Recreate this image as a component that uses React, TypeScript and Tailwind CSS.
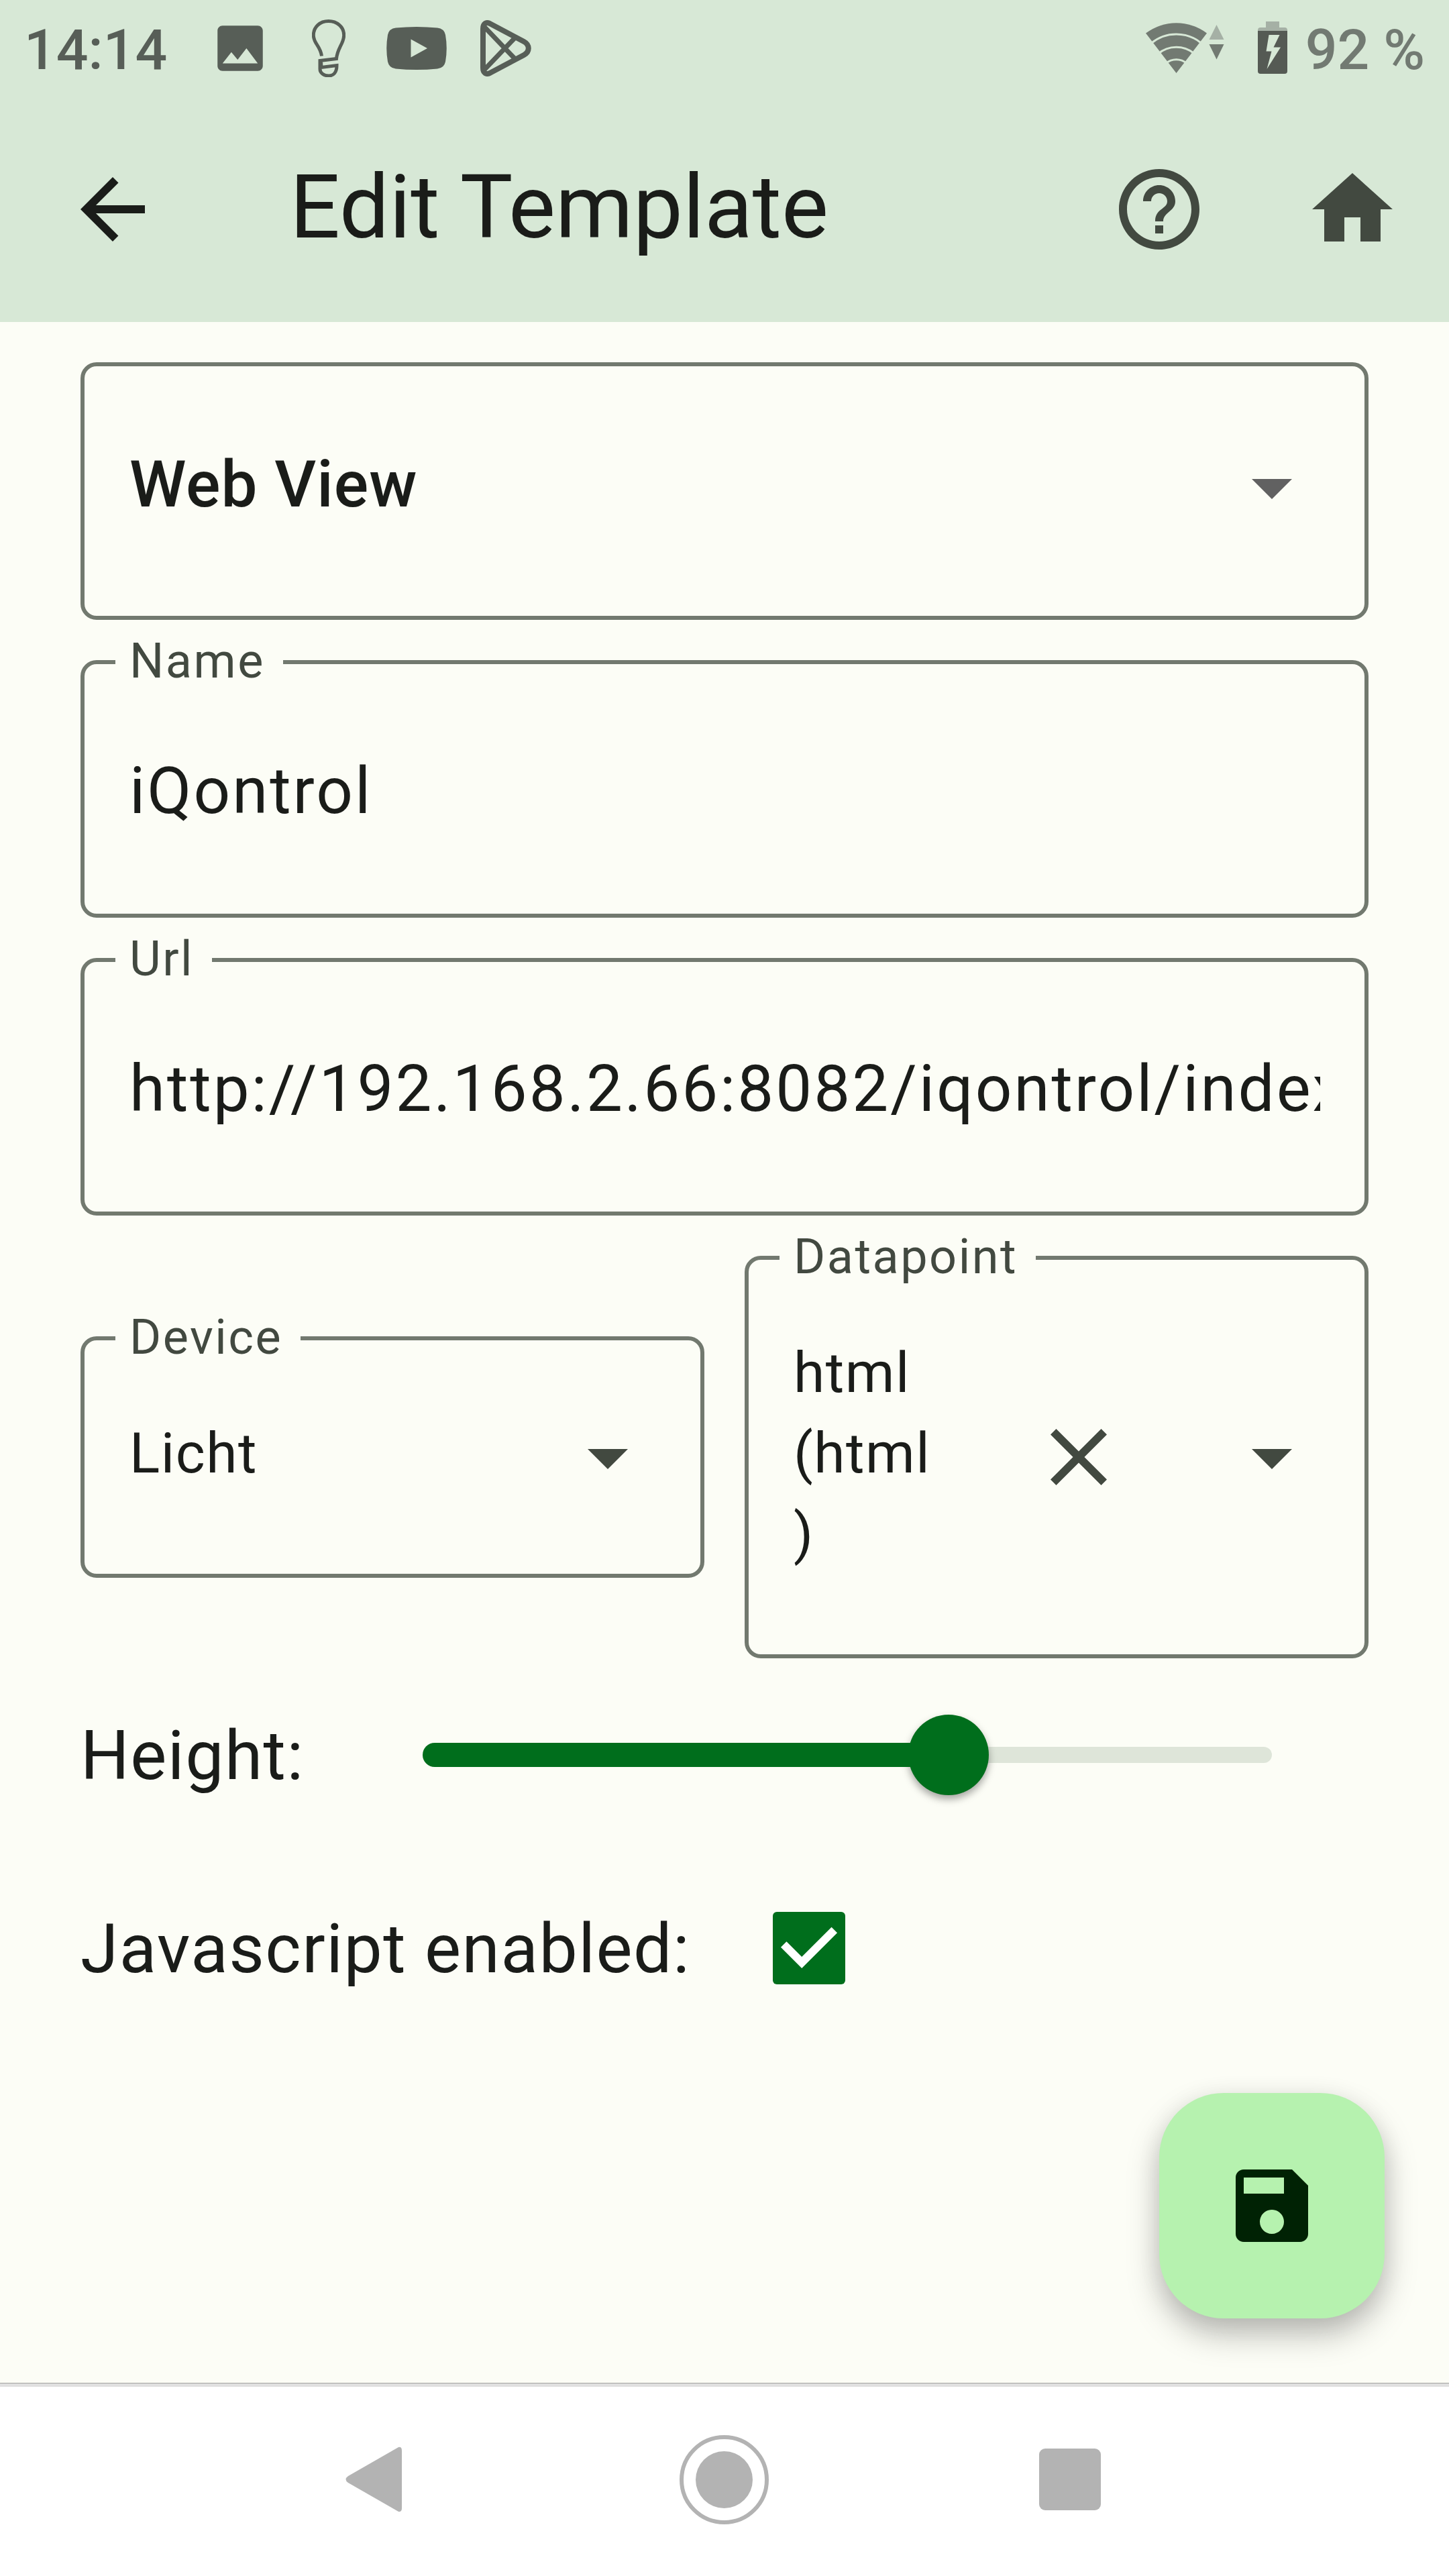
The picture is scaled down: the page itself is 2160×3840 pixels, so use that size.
import type { ReactNode } from "react";

function Glyph({ d, className }: { d: string; className: string }) {
  return (
    <svg viewBox="0 0 24 24" fill="currentColor" className={className} aria-hidden="true">
      <path d={d} />
    </svg>
  );
}

const ICONS = {
  image:
    "M21 19V5c0-1.1-.9-2-2-2H5c-1.1 0-2 .9-2 2v14c0 1.1.9 2 2 2h14c1.1 0 2-.9 2-2zM8.5 13.5l2.5 3.01L14.5 12l4.5 6H5l3.5-4.5z",
  back: "M20 11H7.83l5.59-5.59L12 4l-8 8 8 8 1.41-1.41L7.83 13H20v-2z",
  help: "M11 18h2v-2h-2v2zm1-16C6.48 2 2 6.48 2 12s4.48 10 10 10 10-4.48 10-10S17.52 2 12 2zm0 18c-4.41 0-8-3.59-8-8s3.59-8 8-8 8 3.59 8 8-3.59 8-8 8zm0-14c-2.21 0-4 1.79-4 4h2c0-1.1.9-2 2-2s2 .9 2 2c0 2-3 1.75-3 5h2c0-2.25 3-2.5 3-5 0-2.21-1.79-4-4-4z",
  home: "M10 20v-6h4v6h5v-8h3L12 3 2 12h3v8z",
  dropDown: "M7 10l5 5 5-5z",
  close:
    "M19 6.41L17.59 5 12 10.59 6.41 5 5 6.41 10.59 12 5 17.59 6.41 19 12 13.41 17.59 19 19 17.59 13.41 12z",
  save: "M17 3H5c-1.11 0-2 .9-2 2v14c0 1.1.89 2 2 2h14c1.1 0 2-.9 2-2V7l-4-4zm-5 16c-1.66 0-3-1.34-3-3s1.34-3 3-3 3 1.34 3 3-1.34 3-3 3zm3-10H5V5h10v4z",
};

function StatusBar() {
  return (
    <div className="flex h-[144px] items-center pl-[36px] pr-[36px] text-[84px] leading-[84px] font-medium text-[#575e57]">
      <span className="w-[277px] pt-[6px]">14:14</span>
      <Glyph d={ICONS.image} className="size-[90px] shrink-0" />
      <svg viewBox="0 0 50 86" className="ml-[62px] h-[86px] w-[50px] shrink-0" fill="none" stroke="currentColor" strokeWidth="5">
        <path d="M14.5 54.5C12.500 39 2.300 36 2.300 23.500C2.300 11 12 2.500 24.700 2.500S47.700 11 47.700 23.500C47.700 36 38 42 36.500 58.500L12 61.500V74C12 80 18 84 25 84S37 79 37 68.500L14 71.500L13.500 62" />
      </svg>
      <svg viewBox="0 0 90 64" className="ml-[61px] h-[64px] w-[90px] shrink-0" aria-hidden="true">
        <path
          fill="currentColor"
          fillRule="evenodd"
          d="M14 1.500Q45-1.500 76 1.500Q86 2.500 88 12Q91.500 32 88 52Q86 61.500 76 62.500Q45 65.500 14 62.500Q4 61.500 2 52Q-1.500 32 2 12Q4 2.500 14 1.500ZM36.500 18.500V45.500L61 32Z"
        />
      </svg>
      <svg viewBox="0 0 76 84" className="ml-[50px] h-[84px] w-[76px] shrink-0" fill="none" stroke="currentColor" strokeWidth="8" strokeLinejoin="round">
        <path d="M4 13C4 5 9 2 15 5.500L65 32C74 37 74 47 65 52L15 78.500C9 82 4 79 4 71Z" />
        <path strokeWidth="7" d="M6 10L52 58M6 74L52 26" />
      </svg>
      <div className="flex-1" />
      <svg viewBox="0 0 117 75" className="mb-[2px] h-[75px] w-[117px] shrink-0" aria-hidden="true">
        <path fill="#727a72" d="M45.500 75L0 15.600A75 75 0 0 1 91 15.600Z" />
        <g fill="none" stroke="#d7e8d6" strokeWidth="3">
          <path d="M8 30.500A58.500 58.500 0 0 1 83 30.500" />
          <path d="M18 46.500A42 42 0 0 1 73 46.500" />
          <path d="M30 60.500A24 24 0 0 1 61 60.500" />
        </g>
        <path fill="#a5b0a5" d="M94.500 25L105.500 3L116.500 25Z" />
        <path fill="#727a72" d="M94.500 32L105.500 54.500L116.500 32Z" />
      </svg>
      <svg viewBox="0 0 44 78" className="mb-[2px] ml-[50px] h-[78px] w-[44px] shrink-0" aria-hidden="true">
        <path fill="#a5b0a5" d="M12 0H32V9H40Q44 9 44 13V15H0V13Q0 9 4 9H12Z" />
        <path fill="#555a54" d="M0 14H44V74Q44 78 40 78H4Q0 78 0 74Z" />
        <path fill="#d7e8d6" d="M16.500 20H32.500L23.500 38.500H34L13.500 71L20.500 44.500H12.500Z" />
      </svg>
      <span className="ml-[27px] pt-[6px] text-[#727a72]">92 %</span>
    </div>
  );
}

function AppBar() {
  return (
    <div className="flex h-[336px] items-center pl-[96px] pr-[72px]">
      <Glyph d={ICONS.back} className="size-[144px] shrink-0 text-[#1a1c19]" />
      <h1 className="ml-[192px] flex-1 pb-[7px] text-[132px] leading-[160px] font-normal text-[#1a1c19]">Edit Template</h1>
      <Glyph d={ICONS.help} className="size-[144px] shrink-0 text-[#424940]" />
      <Glyph d={ICONS.home} className="ml-[144px] size-[144px] shrink-0 text-[#424940]" />
    </div>
  );
}

function Field({ label, className, children }: { label?: string; className: string; children: ReactNode }) {
  return (
    <div className={`relative flex items-center rounded-[24px] border-[6px] border-[#72796f] pl-[67px] pr-[66px] ${className}`}>
      {label && (
        <span className="absolute -top-[46px] left-[46px] bg-[#fcfdf6] pl-[21px] pr-[27px] text-[72px] leading-[84px] tracking-[2.5px] text-[#424940]">
          {label}
        </span>
      )}
      {children}
    </div>
  );
}

export default function App() {
  return (
    <div className="flex h-[3840px] w-[2160px] flex-col overflow-hidden bg-[#fcfdf6] font-[Roboto,sans-serif] text-[#1a1c19]">
      <header className="h-[480px] shrink-0 bg-[#d7e8d6]">
        <StatusBar />
        <AppBar />
      </header>

      <main className="relative flex flex-1 flex-col px-[120px] pt-[60px]">
        <div className="flex flex-col gap-[60px]">
          <Field className="h-[384px]">
            <span className="flex-1 pb-[20px] text-[96px] leading-[144px] font-medium tracking-[1px]">Web View</span>
            <Glyph d={ICONS.dropDown} className="mb-[12px] size-[144px] text-[#616161]" />
          </Field>
          <Field label="Name" className="h-[384px]">
            <span className="pt-[5px] text-[96px] leading-[144px] tracking-[3px]">iQontrol</span>
          </Field>
          <Field label="Url" className="h-[384px]">
            <span className="flex-1 overflow-hidden pt-[5px] text-[96px] leading-[144px] tracking-[3px] whitespace-nowrap">
              http://192.168.2.66:8082/iqontrol/index.html
            </span>
          </Field>
          <div className="grid grid-cols-2 items-center gap-[60px]">
            <Field label="Device" className="h-[360px]">
              <span className="flex-1 pb-[10px] text-[84px] leading-[120px] tracking-[1.5px]">Licht</span>
              <Glyph d={ICONS.dropDown} className="size-[144px] text-[#424940]" />
            </Field>
            <Field label="Datapoint" className="h-[600px]">
              <span className="w-[210px] pb-[10px] text-[84px] leading-[120px] tracking-[1.5px] break-all">
                html
                <br />
                (html
                <br />)
              </span>
              <Glyph d={ICONS.close} className="ml-auto size-[144px] text-[#424940]" />
              <Glyph d={ICONS.dropDown} className="ml-[144px] size-[144px] text-[#424940]" />
            </Field>
          </div>
        </div>

        <div className="flex h-[288px] items-center">
          <span className="w-[510px] pt-[2px] text-[102px] leading-[144px] tracking-[1.5px]">Height:</span>
          <div className="flex w-[1266px] items-center">
            <div className="z-10 h-[36px] w-[740px] rounded-l-full bg-[#006e1c]" />
            <div className="relative -mr-[1px] -ml-[16px] size-[120px] shrink-0 rounded-full bg-[#006e1c] shadow-[0_6px_12px_rgba(0,0,0,0.35)]" />
            <div className="h-[24px] flex-1 rounded-r-full bg-[#dee5d9]" />
          </div>
        </div>

        <div className="flex h-[288px] items-center">
          <span className="w-[1032px] pt-[1px] text-[102px] leading-[144px] tracking-[1.5px]">Javascript enabled:</span>
          <svg viewBox="0 0 18 18" className="size-[108px]" aria-hidden="true">
            <rect width="18" height="18" rx="1" fill="#006e1c" />
            <path d="M2.700 8.100L7.200 12.600L15.300 4.500" fill="none" stroke="#fff" strokeWidth="2" />
          </svg>
        </div>

        <button
          type="button"
          aria-label="Save"
          className="absolute right-[96px] bottom-[96px] flex size-[336px] items-center justify-center rounded-[96px] bg-[#b6f2af] text-[#002204] shadow-[0_24px_48px_rgba(0,0,0,0.26),0_6px_36px_rgba(0,0,0,0.07)]"
        >
          <Glyph d={ICONS.save} className="size-[144px]" />
        </button>
      </main>

      <nav className="flex h-[288px] shrink-0 flex-col bg-white">
        <div className="h-[6px] border-t border-[#a3a3a0] bg-[#e0e0e0]" />
        <div className="flex flex-1 items-center justify-center pb-[6px] text-[#b3b3b3]">
          <svg viewBox="0 0 84 98" className="h-[98px] w-[84px]" fill="currentColor">
            <path d="M84 6V92Q84 98 79 97L4 54Q-3 49 4 44L79 1Q84 0 84 6Z" />
          </svg>
          <div className="ml-[414px] flex size-[133px] items-center justify-center rounded-full border-[6px] border-[#b3b3b3]">
            <div className="size-[85px] rounded-full bg-[#b3b3b3]" />
          </div>
          <div className="mr-[4px] ml-[403px] size-[92px] rounded-[9px] bg-[#b3b3b3]" />
        </div>
      </nav>
    </div>
  );
}
